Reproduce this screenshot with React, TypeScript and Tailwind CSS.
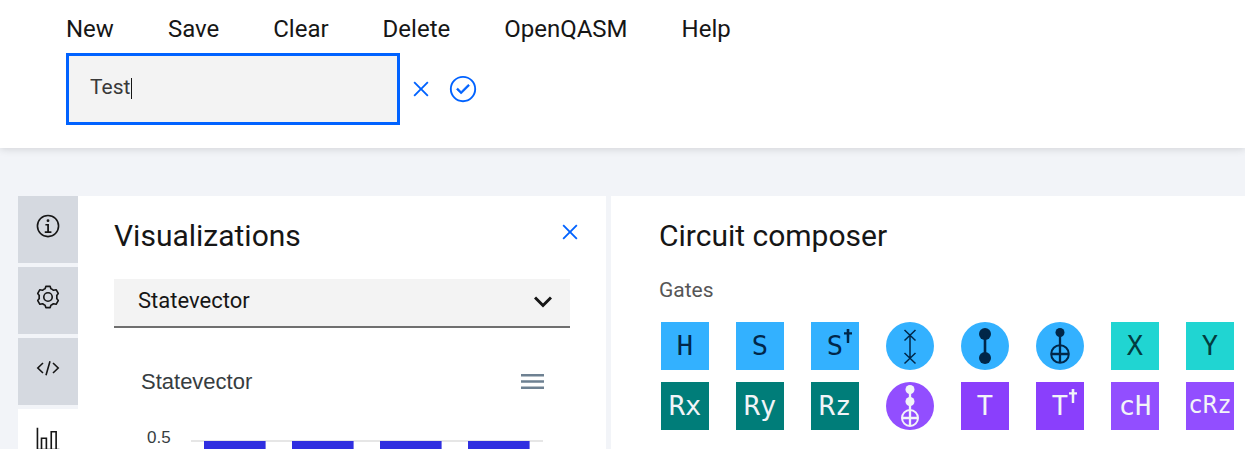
import { useState } from "react";
import type { ReactNode } from "react";

const menuItems = ["New", "Save", "Clear", "Delete", "OpenQASM", "Help"];

function CarbonIcon({ children, className }: { children: ReactNode; className: string }) {
  return (
    <svg viewBox="0 0 32 32" fill="currentColor" className={className} aria-hidden="true">
      {children}
    </svg>
  );
}

const ringPath = "M16,2A14,14,0,1,0,30,16,14,14,0,0,0,16,2Zm0,26A12,12,0,1,1,28,16,12,12,0,0,1,16,28Z";

function CloseIcon() {
  return (
    <CarbonIcon className="size-[30px]">
      <path d="M24 9.4L22.6 8 16 14.6 9.4 8 8 9.4 14.6 16 8 22.6 9.4 24 16 17.4 22.6 24 24 22.6 17.4 16 24 9.4z" />
    </CarbonIcon>
  );
}

function CheckIcon() {
  return (
    <CarbonIcon className="size-[30px]">
      <path d="M14 21.414L9 16.413 10.413 15 14 18.586 21.585 11 23 12.415 14 21.414z" stroke="currentColor" strokeWidth="0.6" />
      <path d={ringPath} />
    </CarbonIcon>
  );
}

function InfoIcon() {
  return (
    <CarbonIcon className="size-[26px]">
      <path d="M17.2 22.5V13.500H12.800v2h2.200v7H12v2h8.200v-2z" />
      <circle cx="16" cy="9.500" r="1.700" />
      <path d={ringPath} />
    </CarbonIcon>
  );
}

function GearIcon() {
  return (
    <svg viewBox="-12 -12 24 24" fill="none" stroke="currentColor" strokeWidth="1.5" strokeLinejoin="round" className="size-[26px]" aria-hidden="true">
      <circle r="3.900" />
      <path d="M-2.700-7.600L-2-9.800H2L2.700-7.600Q4-7.200 5.080-6.200L7.500-6.730L9.460-3.270L8.080-1.400Q8.300 0 8.080 1.400L9.460 3.270L7.500 6.730L5.080 6.200Q4 7.200 2.700 7.600L2 9.800H-2L-2.700 7.600Q-4 7.200-5.080 6.200L-7.500 6.730L-9.460 3.270L-8.080 1.400Q-8.300 0-8.080-1.400L-9.460-3.270L-7.500-6.730L-5.080-6.200Q-4-7.200-2.700-7.600Z" />
    </svg>
  );
}

function CodeIcon() {
  return (
    <svg viewBox="0 0 26 26" fill="none" stroke="currentColor" strokeWidth="1.6" className="size-[26px]" aria-hidden="true">
      <path d="M8 8L2.800 13 8 18M18 8l5.200 5L18 18M15 6.300L11 20.200" />
    </svg>
  );
}

function ChartIcon() {
  return (
    <CarbonIcon className="size-[26px]">
      <path d="M27,28V6H19V28H15V14H7V28H4V2H2V28a2,2,0,0,0,2,2H30V28ZM13,28H9V16h4Zm12,0H21V8h4Z" />
    </CarbonIcon>
  );
}

const sideTabs = [
  { label: "Information", icon: <InfoIcon />, active: false },
  { label: "Settings", icon: <GearIcon />, active: false },
  { label: "Code", icon: <CodeIcon />, active: false },
  { label: "Visualizations", icon: <ChartIcon />, active: true },
];

function SwapDrawing() {
  return (
    <svg viewBox="0 0 48 48" className="size-12" fill="none" stroke="currentColor" strokeWidth="1.5" aria-hidden="true">
      <path d="M24 13.500V36.500M18.500 8l11 10.500M29.500 8l-11 10.500M18.500 31l11 10.500M29.500 31l-11 10.500" />
    </svg>
  );
}

function ControlledZDrawing() {
  return (
    <svg viewBox="0 0 48 48" className="size-12" fill="currentColor" aria-hidden="true">
      <circle cx="24" cy="12" r="6" />
      <circle cx="24" cy="36" r="6" />
      <path d="M22.700 12h2.600v24h-2.600z" />
    </svg>
  );
}

function ControlledNotDrawing() {
  return (
    <svg viewBox="0 0 48 48" className="size-12" fill="none" stroke="currentColor" strokeWidth="2" aria-hidden="true">
      <circle cx="24" cy="10.500" r="4.500" fill="currentColor" stroke="none" />
      <circle cx="24" cy="32" r="8.800" />
      <path d="M24 10v31M15 32h18" strokeWidth="2.300" />
    </svg>
  );
}

function ToffoliDrawing() {
  return (
    <svg viewBox="0 0 48 48" className="size-12" fill="none" stroke="currentColor" strokeWidth="2" aria-hidden="true">
      <circle cx="24" cy="7.500" r="4.500" fill="currentColor" stroke="none" />
      <circle cx="24" cy="19.500" r="4.500" fill="currentColor" stroke="none" />
      <circle cx="24" cy="36" r="8" />
      <path d="M24 7v37M16 36h16" strokeWidth="2.300" />
    </svg>
  );
}

type Gate = { name: string; tone: string; text?: string; dagger?: boolean; drawing?: ReactNode };

const blue = "bg-[#33b1ff] text-[#012749]";
const cyan = "bg-[#20d5d2] text-[#023d40]";
const teal = "bg-[#007d79] text-[#f2f4f8]";
const violet = "bg-[#8a3ffc] text-[#f2f4f8]";
const lilac = "bg-[#924eff] text-[#f2f4f8]";

const gates: Gate[] = [
  { name: "H", tone: blue, text: "H" },
  { name: "S", tone: blue, text: "S" },
  { name: "S dagger", tone: blue, text: "S", dagger: true },
  { name: "Swap", tone: blue, drawing: <SwapDrawing /> },
  { name: "Controlled Z", tone: blue, drawing: <ControlledZDrawing /> },
  { name: "Controlled NOT", tone: blue, drawing: <ControlledNotDrawing /> },
  { name: "X", tone: cyan, text: "X" },
  { name: "Y", tone: cyan, text: "Y" },
  { name: "Rx", tone: teal, text: "Rx" },
  { name: "Ry", tone: teal, text: "Ry" },
  { name: "Rz", tone: teal, text: "Rz" },
  { name: "Toffoli", tone: lilac, drawing: <ToffoliDrawing /> },
  { name: "T", tone: violet, text: "T" },
  { name: "T dagger", tone: violet, text: "T", dagger: true },
  { name: "cH", tone: lilac, text: "cH" },
  { name: "cRz", tone: lilac, text: "cRz" },
];

function GateButton({ gate }: { gate: Gate }) {
  const shape = gate.drawing ? "rounded-full" : "pb-[2px]";
  const size = gate.text && gate.text.length > 2 ? "text-2xl" : "text-[27px]";
  return (
    <button
      type="button"
      aria-label={gate.name}
      className={`relative flex size-12 items-center justify-center font-['DejaVu_Sans_Mono','Liberation_Mono',monospace] leading-none ${size} ${shape} ${gate.tone}`}
    >
      {gate.drawing ?? gate.text}
      {gate.dagger && (
        <svg viewBox="0 0 8 14" className="absolute top-[7px] right-[7px] h-[14px] w-2" fill="currentColor" aria-hidden="true">
          <path d="M2.700 0h2.600v3.200H8v2.200H5.300L5.200 14H2.800L2.700 5.400H0V3.200h2.700z" />
        </svg>
      )}
    </button>
  );
}

function StatevectorChart() {
  return (
    <svg viewBox="0 0 456 200" className="block h-[200px] w-full" preserveAspectRatio="xMinYMin meet" role="img" aria-label="Statevector">
      <text x="33" y="43" fontSize="17" fill="#373d3f" fontFamily="Liberation Sans, Arial, sans-serif">
        0.5
      </text>
      <rect x="77" y="40" width="352" height="2" fill="#e6e6e6" />
      {[90, 178, 266, 354].map((x) => (
        <rect key={x} x={x} y="41" width="61.600" height="159" fill="#302fe0" />
      ))}
    </svg>
  );
}

export default function App() {
  const [name, setName] = useState("Test");
  return (
    <div className="flex h-screen flex-col overflow-hidden bg-[#f2f4f8] font-['Roboto','Liberation_Sans',sans-serif] text-[#161616]">
      <header className="relative shrink-0 bg-white pb-[23px] pl-[66px] shadow-[0_1px_8px_rgba(0,0,0,0.14)]">
        <nav className="flex h-[53px] items-center gap-[54px] pt-1 text-2xl">
          {menuItems.map((item) => (
            <button key={item} type="button">
              {item}
            </button>
          ))}
        </nav>
        <form className="flex items-center" onSubmit={(e) => e.preventDefault()}>
          <div className="relative">
            <input
              aria-label="Circuit name"
              value={name}
              onChange={(e) => setName(e.target.value)}
              className="block h-[72px] w-[334px] border-3 border-[#0062ff] bg-[#f3f3f3] pb-1 pl-[21px] text-[21px] text-[#393939] outline-none"
            />
            <span className="absolute top-[25px] left-[65px] h-[21px] w-px bg-[#161616]" />
          </div>
          <div className="flex gap-3 pl-[6px] text-[#0062ff]">
            <button type="button" aria-label="Cancel">
              <CloseIcon />
            </button>
            <button type="submit" aria-label="Confirm">
              <CheckIcon />
            </button>
          </div>
        </form>
      </header>

      <main className="flex min-h-0 flex-1 pt-12 pl-[18px]">
        <nav className="flex w-[60px] shrink-0 flex-col gap-1">
          {sideTabs.map((tab) => (
            <button
              key={tab.label}
              type="button"
              aria-label={tab.label}
              className={`flex h-[67px] shrink-0 items-start justify-center pt-[17px] ${tab.active ? "bg-white" : "bg-[#d5d9e0]"}`}
            >
              {tab.icon}
            </button>
          ))}
        </nav>

        <section className="w-[528px] shrink-0 bg-white px-9 pt-[21px]">
          <div className="flex items-start justify-between">
            <h2 className="text-[30px] leading-[38px]">Visualizations</h2>
            <button type="button" aria-label="Close" className="-mr-[15px] text-[#0062ff]">
              <CloseIcon />
            </button>
          </div>
          <div className="relative mt-6">
            <select
              aria-label="Visualization type"
              className="block h-[49px] w-full appearance-none border-b-2 border-[#6f6f6f] bg-[#f3f3f3] pb-1 pl-6 text-[22px] outline-none"
            >
              <option>Statevector</option>
            </select>
            <svg viewBox="0 0 18 12" className="pointer-events-none absolute top-[17px] right-[18px] h-3 w-[18px]" fill="none" stroke="currentColor" strokeWidth="3" aria-hidden="true">
              <path d="M1 1.500l8 8 8-8" />
            </svg>
          </div>
          <div className="mt-10 flex items-center justify-between pr-[26px] pl-[27px]">
            <h3 className="font-['Liberation_Sans',Arial,sans-serif] text-[22px] leading-7 text-[#373d3f]">Statevector</h3>
            <button type="button" aria-label="Chart menu">
              <svg viewBox="0 0 23 16" className="h-4 w-[23px]" fill="#6e8192" aria-hidden="true">
                <path d="M0 0h23v2.500H0zM0 6.200h23v2.500H0zM0 12.500h23v2.500H0z" />
              </svg>
            </button>
          </div>
          <div className="mt-1">
            <StatevectorChart />
          </div>
        </section>

        <section className="ml-[5px] min-w-0 flex-1 overflow-hidden bg-white pt-[21px] pl-12">
          <h2 className="text-[30px] leading-[38px]">Circuit composer</h2>
          <p className="mt-[21px] text-[21px] leading-7 text-[#565656]">Gates</p>
          <div className="mt-[18px] grid grid-cols-[repeat(8,48px)] gap-x-[27px] gap-y-3 pl-[2px]">
            {gates.map((gate) => (
              <GateButton key={gate.name} gate={gate} />
            ))}
          </div>
        </section>
      </main>
    </div>
  );
}
